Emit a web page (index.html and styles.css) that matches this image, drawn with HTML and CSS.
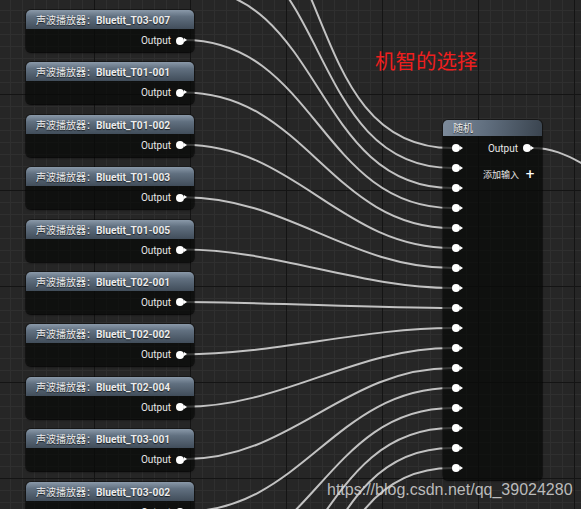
FILE: index.html
```html
<!DOCTYPE html>
<html lang="zh-CN">
<head>
<meta charset="utf-8">
<title>Blueprint</title>
<link rel="stylesheet" href="styles.css">
</head>
<body>
<div class="canvas">
  <svg class="wires" width="581" height="509" viewBox="0 0 581 509">
    <g fill="none" stroke="#c2c2c2" stroke-width="2">
      <path d="M184 -117.2 C344 -117.2 292 148 452 148"/>
      <path d="M184 -64.8 C334.2 -64.8 301.8 168 452 168"/>
      <path d="M184 -12.4 C324.5 -12.4 311.5 188 452 188"/>
      <path d="M184 40 C314.8 40 321.2 208 452 208"/>
      <path d="M184 92.4 C305.1 92.4 330.9 228 452 228"/>
      <path d="M184 144.8 C295.4 144.8 340.6 248 452 248"/>
      <path d="M184 197.2 C285.6 197.2 350.4 268 452 268"/>
      <path d="M184 249.6 C275.9 249.6 360.1 288 452 288"/>
      <path d="M184 302 C266.2 302 369.8 308 452 308"/>
      <path d="M184 354.4 C272.3 354.4 363.7 328 452 328"/>
      <path d="M184 406.8 C282 406.8 354 348 452 348"/>
      <path d="M184 459.2 C291.8 459.2 344.2 368 452 368"/>
      <path d="M184 511.6 C301.5 511.6 334.5 388 452 388"/>
      <path d="M184 564 C311.2 564 324.8 408 452 408"/>
      <path d="M184 616.4 C320.9 616.4 315.1 428 452 428"/>
      <path d="M184 668.8 C330.6 668.8 305.4 448 452 448"/>
      <path d="M184 721.2 C340.4 721.2 295.6 468 452 468"/>
      <path d="M532 148 C550 148 565 153 590 168"/>
    </g>
  </svg>

  <div class="snd-list">
    <div class="node snd"><div class="hdr"><span class="cjk">声波播放器：</span><b>Bluetit_T03-007</b></div><div class="body"><span class="lbl">Output</span><span class="pin"></span></div></div>
    <div class="node snd"><div class="hdr"><span class="cjk">声波播放器：</span><b>Bluetit_T01-001</b></div><div class="body"><span class="lbl">Output</span><span class="pin"></span></div></div>
    <div class="node snd"><div class="hdr"><span class="cjk">声波播放器：</span><b>Bluetit_T01-002</b></div><div class="body"><span class="lbl">Output</span><span class="pin"></span></div></div>
    <div class="node snd"><div class="hdr"><span class="cjk">声波播放器：</span><b>Bluetit_T01-003</b></div><div class="body"><span class="lbl">Output</span><span class="pin"></span></div></div>
    <div class="node snd"><div class="hdr"><span class="cjk">声波播放器：</span><b>Bluetit_T01-005</b></div><div class="body"><span class="lbl">Output</span><span class="pin"></span></div></div>
    <div class="node snd"><div class="hdr"><span class="cjk">声波播放器：</span><b>Bluetit_T02-001</b></div><div class="body"><span class="lbl">Output</span><span class="pin"></span></div></div>
    <div class="node snd"><div class="hdr"><span class="cjk">声波播放器：</span><b>Bluetit_T02-002</b></div><div class="body"><span class="lbl">Output</span><span class="pin"></span></div></div>
    <div class="node snd"><div class="hdr"><span class="cjk">声波播放器：</span><b>Bluetit_T02-004</b></div><div class="body"><span class="lbl">Output</span><span class="pin"></span></div></div>
    <div class="node snd"><div class="hdr"><span class="cjk">声波播放器：</span><b>Bluetit_T03-001</b></div><div class="body"><span class="lbl">Output</span><span class="pin"></span></div></div>
    <div class="node snd"><div class="hdr"><span class="cjk">声波播放器：</span><b>Bluetit_T03-002</b></div><div class="body"><span class="lbl">Output</span><span class="pin"></span></div></div>
  </div>

  <div class="node rnd">
    <div class="hdr">随机</div>
    <div class="body">
      <div class="inputs">
        <span class="row"><span class="pin"></span></span>
        <span class="row"><span class="pin"></span></span>
        <span class="row"><span class="pin"></span></span>
        <span class="row"><span class="pin"></span></span>
        <span class="row"><span class="pin"></span></span>
        <span class="row"><span class="pin"></span></span>
        <span class="row"><span class="pin"></span></span>
        <span class="row"><span class="pin"></span></span>
        <span class="row"><span class="pin"></span></span>
        <span class="row"><span class="pin"></span></span>
        <span class="row"><span class="pin"></span></span>
        <span class="row"><span class="pin"></span></span>
        <span class="row"><span class="pin"></span></span>
        <span class="row"><span class="pin"></span></span>
        <span class="row"><span class="pin"></span></span>
        <span class="row"><span class="pin"></span></span>
        <span class="row"><span class="pin"></span></span>
      </div>
      <div class="outputs">
        <span class="row"><span class="lbl">Output</span><span class="pin"></span></span>
        <span class="row add"><span class="lbl cjk">添加输入</span><span class="plus">+</span></span>
      </div>
    </div>
  </div>

  <div class="note">机智的选择</div>
  <div class="watermark">https://blog.csdn.net/qq_39024280</div>
</div>
</body>
</html>
```

FILE: styles.css
```css
html, body {
  margin: 0;
  padding: 0;
  background: #262626;
}

.canvas {
  position: relative;
  width: 581px;
  height: 509px;
  overflow: hidden;
  background-color: #262626;
  background-image:
    linear-gradient(90deg, #141414 1px, transparent 1px),
    linear-gradient(180deg, #141414 1px, transparent 1px),
    linear-gradient(90deg, #2f2f2f 1px, transparent 1px),
    linear-gradient(180deg, #2f2f2f 1px, transparent 1px);
  background-size: 96px 96px, 96px 96px, 12px 12px, 12px 12px;
  background-position: 94px 0, 0 94px, 10px 0, 0 10px;
  font-family: Roboto, "Noto Sans CJK SC", sans-serif;
  color: #e6e6e6;
}

.wires {
  position: absolute;
  left: 0;
  top: 0;
}

.snd-list {
  position: absolute;
  left: 26px;
  top: 10px;
  display: flex;
  flex-direction: column;
  gap: 10.4px;
}

.node {
  border-radius: 5px;
  background: rgba(8, 10, 8, 0.74);
  box-shadow: 0 1px 2px rgba(0, 0, 0, 0.7), 0 0 0 1px rgba(0, 0, 0, 0.35);
  overflow: hidden;
}

.hdr {
  background: linear-gradient(180deg, #8a99a9 0, #617080 35%, #414d5a 100%);
  color: #ededed;
  text-shadow: 0 1px 1px rgba(0, 0, 0, 0.7);
  white-space: nowrap;
}

.snd {
  width: 168px;
  height: 42px;
}

.snd .hdr {
  height: 19px;
  line-height: 19px;
  padding-left: 10px;
  font-size: 10px;
}

.cjk {
  font-family: "Noto Sans CJK SC", sans-serif;
  font-size: 10px;
}

.snd .hdr b {
  font-weight: 700;
  font-family: Roboto, sans-serif;
  font-size: 10.2px;
}

.snd .body {
  height: 23px;
  display: flex;
  justify-content: flex-end;
  align-items: center;
  padding-right: 10px;
}

.lbl {
  font-size: 10px;
  color: #e8e8e8;
}

.pin {
  position: relative;
  width: 8px;
  height: 8px;
  border-radius: 50%;
  background: #fff;
  margin-left: 5px;
  flex: none;
}

.pin::after {
  content: "";
  position: absolute;
  left: 8px;
  top: 1.5px;
  border-left: 3px solid #fff;
  border-top: 2.5px solid transparent;
  border-bottom: 2.5px solid transparent;
}

.rnd {
  position: absolute;
  left: 443px;
  top: 120px;
  width: 99px;
  height: 360px;
}

.rnd .hdr {
  height: 16px;
  line-height: 16px;
  padding-left: 10px;
  font-family: "Noto Sans CJK SC", sans-serif;
  font-size: 10px;
  background: linear-gradient(100deg, #7d8b9b 0, #5f6d7d 45%, #3a444f 100%);
}

.rnd .body {
  display: flex;
  justify-content: space-between;
  padding-top: 2px;
}

.inputs {
  display: flex;
  flex-direction: column;
  padding-left: 9px;
}

.inputs .row {
  height: 20px;
  display: flex;
  align-items: center;
}

.inputs .pin {
  margin-left: 0;
}

.outputs {
  display: flex;
  flex-direction: column;
  align-items: flex-end;
  padding-right: 11px;
}

.outputs .row {
  height: 20px;
  display: flex;
  align-items: center;
}

.outputs .row.add {
  margin-top: 10px;
  height: 12px;
  margin-right: -4px;
}

.lbl.cjk {
  font-size: 9px;
}

.plus {
  font-family: "DejaVu Sans", sans-serif;
  font-weight: 700;
  font-size: 12px;
  color: #fff;
  margin-left: 6px;
  line-height: 12px;
}

.note {
  position: absolute;
  left: 375px;
  top: 48px;
  font-family: "Noto Sans CJK SC", sans-serif;
  font-size: 20.5px;
  line-height: 24px;
  color: #ee1e1e;
}

.watermark {
  position: absolute;
  left: 327px;
  top: 482px;
  font-family: "Liberation Sans", Arial, sans-serif;
  font-size: 16px;
  line-height: 16px;
  color: rgba(215, 215, 215, 0.85);
  white-space: nowrap;
}
```
